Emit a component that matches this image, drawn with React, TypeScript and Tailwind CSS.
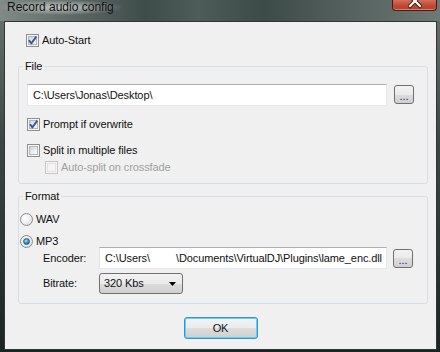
import React from "react";

function CheckBox({ checked, disabled }: { checked?: boolean; disabled?: boolean }) {
  return (
    <span
      className={
        "relative flex items-center justify-center w-[13px] h-[13px] shrink-0 border " +
        (disabled ? "border-[#c6c6c6] bg-[#f4f4f4]" : "border-[#8e8f8f] bg-[#f6f6f6]")
      }
    >
      <span
        className={
          "w-[9px] h-[9px] border " +
          (disabled
            ? "border-[#e3e3e3] bg-[#f4f4f4]"
            : "border-[#b4b8bd] bg-[linear-gradient(135deg,#cdd1d6,#eef0f2_60%,#fbfbfb)]")
        }
      />
      {checked && (
        <svg className="absolute left-0 top-0" width="11" height="11" viewBox="0 0 11 11">
          <path d="M2 5.2 L4.4 8.4 L9.3 1.6" fill="none" stroke="#3f5596" strokeWidth="1.9" strokeLinejoin="round" />
        </svg>
      )}
    </span>
  );
}

function Radio({ checked }: { checked?: boolean }) {
  return (
    <span className="flex items-center justify-center w-[13px] h-[13px] shrink-0 rounded-full border border-[#8a8c8e] bg-[radial-gradient(circle_at_35%_35%,#ffffff,#ececec_55%,#cfd1d3)]">
      {checked && (
        <span className="w-[7px] h-[7px] rounded-full border border-[#3c5670] bg-[radial-gradient(circle_at_40%_35%,#9fe2ff,#2b8bd0_55%,#0c4c86)]" />
      )}
    </span>
  );
}

function Browse() {
  return (
    <div className="w-[20px] h-[19px] shrink-0 rounded-[3px] border border-[#707070] bg-[linear-gradient(#f2f2f2_0%,#ebebeb_50%,#dddddd_50%,#cfcfcf_100%)] flex items-end justify-center pb-[1px] text-[11px] leading-[11px] text-[#1a1a60] tracking-[0px]">
      ...
    </div>
  );
}

function TextBox({ w, children }: { w: string; children: React.ReactNode }) {
  return (
    <div
      className={
        w +
        " h-[22px] shrink-0 bg-white border border-[#e3e9ef] border-t-[#abadb3] border-l-[#e2e3ea] flex items-center pl-[5px] whitespace-nowrap overflow-hidden"
      }
    >
      {children}
    </div>
  );
}

export default function App() {
  return (
    <div className="w-[440px] h-[352px] flex flex-col overflow-hidden bg-[linear-gradient(#6a7571,#3a4744_40%,#1a2523)] font-['Liberation_Sans',Arial,sans-serif] text-[11px] tracking-[-0.1px] text-[#111]">
      <div className="h-[21px] shrink-0 flex items-start bg-[linear-gradient(90deg,#808a86_0%,#5a6663_18%,#3f4d4a_33%,#4e5c59_45%,#3d4b48_60%,#55625f_80%,#6e7874_100%)]">
        <div className="pl-[7px] pr-[8px] text-[12px] leading-[15px] tracking-[0px] bg-[radial-gradient(ellipse_at_center,rgba(230,235,232,0.75),rgba(230,235,232,0)_72%)]">
          Record audio config
        </div>
        <div className="ml-auto mr-[3px] w-[45px] h-[11px] rounded-b-[4px] border border-t-0 border-[#4a1a12] bg-[linear-gradient(#d0705c,#c2452f_60%,#b9402b)] shadow-[inset_0_-1px_0_rgba(255,255,255,0.35)] flex justify-center">
          <svg width="14" height="9" viewBox="0 0 14 9">
            <path d="M2 -4 L12 6 M12 -4 L2 6" stroke="#3b1710" strokeWidth="4" strokeLinecap="square" />
            <path d="M2 -4 L12 6 M12 -4 L2 6" stroke="#ffffff" strokeWidth="2.2" strokeLinecap="square" />
          </svg>
        </div>
      </div>

      <div className="ml-[4px] mr-[3px] mb-[2px] flex-1 border border-[#2c3836] bg-[#f0f0f0] flex flex-col">
        <label className="mt-[12px] ml-[21px] h-[13px] flex items-center gap-[3px] leading-[13px]">
          <CheckBox checked />
          <span>Auto-Start</span>
        </label>

        <fieldset className="mt-[13px] ml-[13px] w-[410px] border border-[#d5dfe5] rounded-[3px] pb-[9px]">
          <legend className="ml-[4px] px-[2px] leading-[13px]">File</legend>
          <div className="flex flex-col">
            <div className="mt-[11px] ml-[8px] flex items-start gap-[7px]">
              <TextBox w="w-[360px]">{"C:\\Users\\Jonas\\Desktop\\"}</TextBox>
              <div className="mt-[1px]">
                <Browse />
              </div>
            </div>
            <label className="mt-[12px] ml-[8px] h-[13px] flex items-center gap-[3px] leading-[13px]">
              <CheckBox checked />
              <span>Prompt if overwrite</span>
            </label>
            <label className="mt-[13px] ml-[8px] h-[13px] flex items-center gap-[3px] leading-[13px]">
              <CheckBox />
              <span>Split in multiple files</span>
            </label>
            <label className="mt-[4px] ml-[26px] h-[13px] flex items-center gap-[3px] leading-[13px] text-[#a0a0a0]">
              <CheckBox disabled />
              <span>Auto-split on crossfade</span>
            </label>
          </div>
        </fieldset>

        <fieldset className="mt-[6px] ml-[13px] w-[410px] border border-[#d5dfe5] rounded-[3px] pb-[9px]">
          <legend className="ml-[4px] px-[2px] leading-[13px]">Format</legend>
          <div className="flex flex-col">
            <label className="mt-[10px] ml-[1px] h-[13px] flex items-center gap-[3px] leading-[13px]">
              <Radio />
              <span>WAV</span>
            </label>
            <label className="mt-[9px] ml-[1px] h-[13px] flex items-center gap-[3px] leading-[13px]">
              <Radio checked />
              <span>MP3</span>
            </label>
            <div className="mt-[-1px] ml-[24px] flex items-center">
              <span className="w-[56px]">Encoder:</span>
              <TextBox w="w-[288px]">
                {"C:\\Users\\"}
                <span className="inline-block w-[26px]" />
                {"\\Documents\\VirtualDJ\\Plugins\\lame_enc.dll"}
              </TextBox>
              <div className="ml-[6px]">
                <Browse />
              </div>
            </div>
            <div className="mt-[4px] ml-[24px] flex items-center">
              <span className="w-[56px]">Bitrate:</span>
              <div className="w-[84px] h-[21px] rounded-[3px] border border-[#707070] bg-[linear-gradient(#f2f2f2_0%,#ebebeb_50%,#dddddd_50%,#cfcfcf_100%)] flex items-center pl-[4px] pr-[6px]">
                <span>320 Kbs</span>
                <svg className="ml-auto" width="7" height="4" viewBox="0 0 7 4">
                  <path d="M0 0 H7 L3.5 4 Z" fill="#000" />
                </svg>
              </div>
            </div>
          </div>
        </fieldset>

        <div className="mt-[13px] flex justify-center">
          <button className="w-[74px] h-[22px] rounded-[3px] border border-[#3c8fd0] shadow-[inset_0_0_0_1px_#5fd0f6] bg-[linear-gradient(#f3f3f3_0%,#ebebeb_50%,#dddddd_50%,#cfcfcf_100%)] text-[11px] leading-[13px]">
            OK
          </button>
        </div>
      </div>
    </div>
  );
}
